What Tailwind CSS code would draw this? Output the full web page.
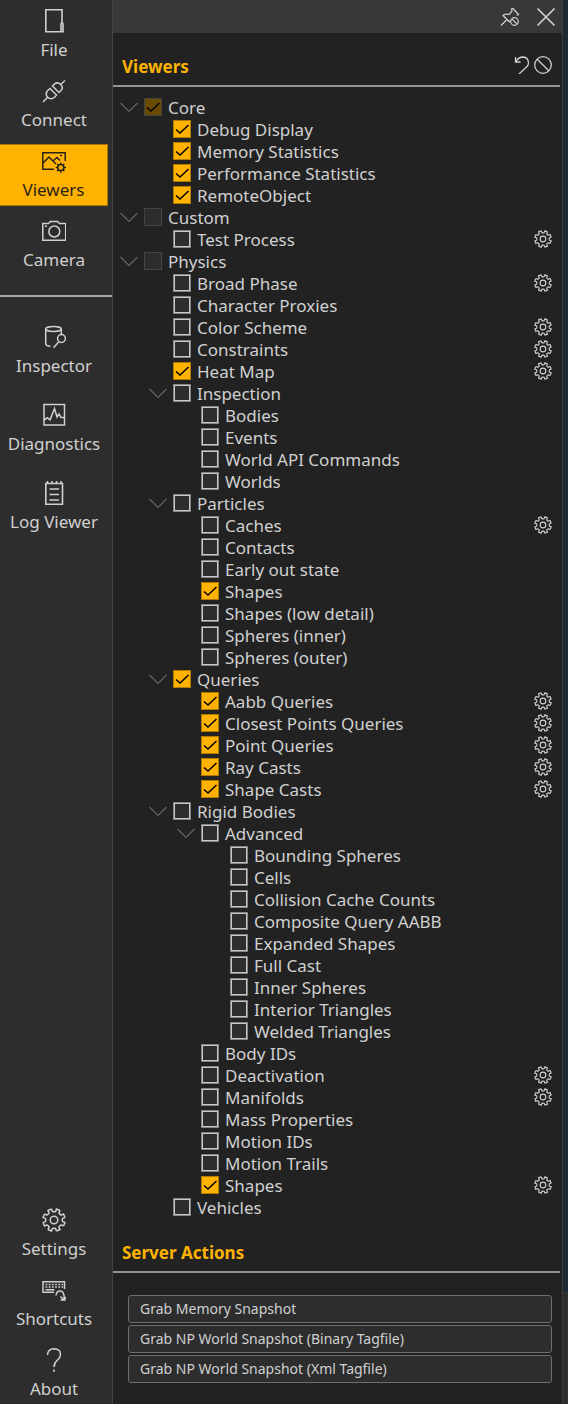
<!DOCTYPE html>
<html lang="en">
<head>
<meta charset="utf-8">
<meta name="viewport" content="width=device-width, initial-scale=1">
<title>Viewers</title>
<script src="https://cdn.jsdelivr.net/npm/@tailwindcss/browser@4"></script>
</head>
<body class="flex min-h-screen bg-[#222222] font-['Noto_Sans','Open_Sans',sans-serif] text-[17px] text-[#d0d0d0]">

<!-- Shared icon shapes -->
<svg class="hidden" aria-hidden="true">
  <symbol id="gear" viewBox="-12 -12 24 24">
    <g fill="none" stroke="currentColor" stroke-linejoin="round">
      <path id="tooth" d="M-2.4-11L-1.6-8.5Q0-7.9 1.6-8.5L2.4-11L6.08-9.48"/>
      <use href="#tooth" transform="rotate(45)"/><use href="#tooth" transform="rotate(90)"/>
      <use href="#tooth" transform="rotate(135)"/><use href="#tooth" transform="rotate(180)"/>
      <use href="#tooth" transform="rotate(225)"/><use href="#tooth" transform="rotate(270)"/>
      <use href="#tooth" transform="rotate(315)"/>
      <circle r="3.8"/>
    </g>
  </symbol>
</svg>

<nav class="flex w-[113px] shrink-0 flex-col border-r border-[#434343] bg-[#2d2d2d]" aria-label="Main">
  <div class="flex flex-col gap-2 pt-1 pr-1">
    <button class="flex h-[62px] flex-col items-center gap-[5px] pt-[5px] leading-6">
      <svg class="size-6 shrink-0" viewBox="0 0 24 24" fill="none" stroke="currentColor" stroke-width="1.6"><path d="M20 14V.8H3.800v22H21V15.500q0-1.600-1-1.600t-1 1.600V22.800"/></svg>
      File</button>
    <button class="flex h-[62px] flex-col items-center gap-[5px] pt-[5px] leading-6">
      <svg class="size-6 shrink-0" viewBox="0 0 24 24" fill="none" stroke="currentColor" stroke-width="1.5"><path d="M1 23L5.500 18.500M18.500 5.500L23 1.500M8 9.500L14.500 16L12.500 18.300Q9 21.300 5.700 18.300Q2.700 15 5.700 11.500ZM10.500 7L17 13.500L19 11.500Q21.700 8.500 18.700 5.500Q15.500 2.500 12.500 5Z"/></svg>
      Connect</button>
    <button class="flex h-[62px] flex-col items-center gap-1 border-y border-r border-[#a87600] bg-[#ffb300] pt-[5px] leading-6 text-[#2a2418]" aria-current="page">
      <svg class="size-6 shrink-0" viewBox="0 0 24 24" fill="none" stroke="currentColor" stroke-width="1.5"><path d="M12 19.200H.8V2.800H23.200V11M1 13L7 7L14 14M11 11L15 7.500L18 10.500M18 5.500H20"/><circle cx="18.800" cy="17.500" r="3"/><path d="M18.800 12.500v2M18.800 20.500v2.300M13.800 17.500h2M21.800 17.500h2.200M15.300 14l1.400 1.400M20.900 19.600l1.500 1.500M22.300 14l-1.400 1.400M16.700 19.600l-1.500 1.500"/></svg>
      Viewers</button>
    <button class="flex h-[62px] flex-col items-center gap-[5px] pt-[5px] leading-6">
      <svg class="size-6 shrink-0" viewBox="0 0 24 24" fill="none" stroke="currentColor" stroke-width="1.5"><path d="M.8 4.500H6.500L8.500 2.500H15.500L17.500 4.500H23.700V21.300H.8ZM3 7.300H5"/><circle cx="12.300" cy="12.500" r="5.500"/></svg>
      Camera</button>
  </div>
  <hr class="mt-[19px] border-t-2 border-[#a5a5a5]">
  <div class="flex flex-col gap-4 pt-[23px] pr-1">
    <button class="flex h-[62px] flex-col items-center gap-[5px] pt-[5px] leading-6">
      <svg class="size-6 shrink-0" viewBox="0 0 24 24" fill="none" stroke="currentColor" stroke-width="1.5"><ellipse cx="11.500" cy="4" rx="7.800" ry="2.500"/><path d="M3.700 4V18.500Q3.700 21 8.500 21.300M19.300 4V9.500M17 16.500L11.500 22.800"/><circle cx="19.500" cy="13.500" r="3.900"/></svg>
      Inspector</button>
    <button class="flex h-[62px] flex-col items-center gap-[5px] pt-[5px] leading-6">
      <svg class="size-6 shrink-0" viewBox="0 0 24 24" fill="none" stroke="currentColor" stroke-width="1.500"><path d="M2 1.500H22.500V22H2ZM2 17L5.500 14.800L8 17L12.500 5.500L15 14L17 11L19 14.500H22.500"/></svg>
      Diagnostics</button>
    <button class="flex h-[62px] flex-col items-center gap-[5px] pt-[5px] leading-6">
      <svg class="size-6 shrink-0" viewBox="0 0 24 24" fill="none" stroke="currentColor" stroke-width="1.600"><path d="M3.800 2.500H20.500V23.200H3.800ZM5.500 0V3M10 0V3M14.500 0V3M19 0V3M7.500 8H17M7.500 13.500H17M7.500 19H17"/></svg>
      Log Viewer</button>
  </div>
  <div class="mt-auto flex flex-col gap-[9px] pr-1">
    <button class="flex h-[61px] flex-col items-center gap-[5px] pt-[5px] leading-6">
      <svg class="size-6 shrink-0" stroke-width="1.500"><use href="#gear"/></svg>
      Settings</button>
    <button class="flex h-[61px] flex-col items-center gap-[5px] pt-[5px] leading-6">
      <svg class="size-6 shrink-0" viewBox="0 0 24 24" fill="none" stroke="currentColor" stroke-width="1.500"><path d="M12 14.200H1V3.700H22.500V11"/><path stroke-dasharray="1.800 1.400" d="M3.500 6.500H21M3.500 9H21"/><path d="M3.500 11.700H12.500M14 17.500Q14.500 12.700 18.500 13Q22.500 13.500 22.300 21.500M18.500 18.500L22.200 22L24 19M18.500 22H23.500"/></svg>
      Shortcuts</button>
    <button class="flex h-[61px] flex-col items-center gap-[5px] pt-[5px] leading-6">
      <svg class="size-6 shrink-0" viewBox="0 0 24 24" fill="none" stroke="currentColor" stroke-width="1.500"><path d="M5.500 7Q6 .8 12 .8Q18.500 1 18.500 6.500Q18.500 9.500 15.500 12Q12 15 12 19M12 21.500V24"/></svg>
      About</button>
  </div>
</nav>

<main class="flex min-w-0 grow flex-col">
  <header class="flex h-[33px] items-center justify-end gap-4 bg-[#383838] pr-[6px]">
    <button aria-label="Unpin">
      <svg class="size-5" viewBox="0 0 20 20" fill="none" stroke="currentColor" stroke-width="1.200"><path d="M1 18.500L6.500 13M9.500 15L3 8.500Q6 6.500 9 7.500L12 4L11.500 2L13 1.500L18.500 7.500L17 8.500"/><circle cx="14.500" cy="14.500" r="3.800"/><path d="M11.800 11.800L17.200 17.200M9.500 15L10.500 13"/></svg>
    </button>
    <button aria-label="Close">
      <svg class="size-5" viewBox="0 0 20 20" fill="none" stroke="currentColor" stroke-width="1.700"><path d="M1.500 1.500L18.500 18.500M18.500 1.500L1.500 18.500"/></svg>
    </button>
  </header>

  <section>
    <div class="mr-[2px] flex h-[54px] items-end justify-between border-b-2 border-[#939193] pr-2 pl-[9px]">
      <h2 class="pb-[6px] leading-6 font-bold text-[#ffb300]">Viewers</h2>
      <div class="flex gap-[2px] pb-[11px]">
        <button aria-label="Reset"><svg class="size-[18px]" viewBox="0 0 18 18" fill="none" stroke="currentColor" stroke-width="1.300"><path d="M1.500 1V6H6.500M1.500 6Q4.500 1 9 1Q14.500 1.500 14.500 7Q14.500 9.500 12 11.500L5 18"/></svg></button>
        <button aria-label="Disable all"><svg class="size-[18px]" viewBox="0 0 18 18" fill="none" stroke="currentColor" stroke-width="1.300"><circle cx="9" cy="9" r="8.300"/><path d="M3.200 3.200L14.800 14.800"/></svg></button>
      </div>
    </div>
    <ul id="tree" class="pt-[10px] pr-[10px] pl-[7px]"></ul>
  </section>

  <section>
    <div class="mr-[2px] flex h-[54px] items-end border-b-2 border-[#939193] pl-[9px]">
      <h2 class="pb-[6px] leading-6 font-bold text-[#ffb300]">Server Actions</h2>
    </div>
    <div class="flex flex-col gap-[2px] pt-[22px] pr-[10px] pl-[15px] text-sm">
      <button class="h-7 rounded-[3px] border border-[#6e6e6e] bg-[#2d2d2d] px-[11px] text-left">Grab Memory Snapshot</button>
      <button class="h-7 rounded-[3px] border border-[#6e6e6e] bg-[#2d2d2d] px-[11px] text-left">Grab NP World Snapshot (Binary Tagfile)</button>
      <button class="h-7 rounded-[3px] border border-[#6e6e6e] bg-[#2d2d2d] px-[11px] text-left">Grab NP World Snapshot (Xml Tagfile)</button>
    </div>
  </section>
</main>

<!-- Edge of the neighbouring viewport -->
<aside class="flex w-[6px] shrink-0 flex-col border-l border-[#3a3a3a]">
  <div class="grow bg-[#1e2936]"></div>
  <div class="h-[112px] border-t border-[#3a3a3a] bg-[#2d2d2d]"></div>
</aside>

<script>
  // Each line: depth, flags, label.  v = expandable, x = checked, d = disabled, g = has settings
  const rows = `0 vxd Core
1 x Debug Display
1 x Memory Statistics
1 x Performance Statistics
1 x RemoteObject
0 vd Custom
1 g Test Process
0 vd Physics
1 g Broad Phase
1 - Character Proxies
1 g Color Scheme
1 g Constraints
1 xg Heat Map
1 v Inspection
2 - Bodies
2 - Events
2 - World API Commands
2 - Worlds
1 v Particles
2 g Caches
2 - Contacts
2 - Early out state
2 x Shapes
2 - Shapes (low detail)
2 - Spheres (inner)
2 - Spheres (outer)
1 vx Queries
2 xg Aabb Queries
2 xg Closest Points Queries
2 xg Point Queries
2 xg Ray Casts
2 xg Shape Casts
1 v Rigid Bodies
2 v Advanced
3 - Bounding Spheres
3 - Cells
3 - Collision Cache Counts
3 - Composite Query AABB
3 - Expanded Shapes
3 - Full Cast
3 - Inner Spheres
3 - Interior Triangles
3 - Welded Triangles
2 - Body IDs
2 g Deactivation
2 g Manifolds
2 - Mass Properties
2 - Motion IDs
2 - Motion Trails
2 xg Shapes
1 - Vehicles`.split('\n');
  const indents = ['pl-0', 'pl-[29px]', 'pl-[57px]', 'pl-[86px]'];
  const chevron = `<button class="mb-[2px] w-[18px]" aria-label="Collapse"><svg class="h-[18px] w-[18px]" viewBox="0 0 18 18" fill="none" stroke="#646464" stroke-width="1.2"><path d="M.5 5L9 13.500L17.500 5"/></svg></button>`;
  document.getElementById('tree').innerHTML = rows.map((row, i) => {
    const [, depth, flags, label] = row.match(/^(\d) (\S+) (.+)$/);
    const has = f => flags.includes(f);
    return `<li class="flex h-[22px] items-center gap-[6px] ${indents[depth]}">
      ${has('v') ? chevron : '<span class="w-[18px]"></span>'}
      <span class="mb-[2px] grid size-[18px] shrink-0">
        <input id="c${i}" type="checkbox" ${has('x') ? 'checked' : ''} ${has('d') ? 'disabled' : ''} class="peer col-start-1 row-start-1 size-[18px] appearance-none border border-[#858585] bg-[#2d2d2d] inset-ring inset-ring-[#c8c8c8] checked:border-[#b07c00] checked:bg-[#ffb300] checked:inset-ring-0 disabled:border-[#444444] disabled:inset-ring-0 disabled:checked:bg-[#6b4b00]">
        <svg class="pointer-events-none invisible col-start-1 row-start-1 size-[18px] peer-checked:visible" viewBox="0 0 18 18" fill="none" stroke="#000" stroke-width="1.5"><path d="M3 9.500L7 13L15.500 5"/></svg>
      </span>
      <label for="c${i}" class="leading-[22px]">${label}</label>
      ${has('g') ? `<button class="mb-[2px] ml-auto" aria-label="${label} settings"><svg class="size-[18px]" stroke-width="1.5"><use href="#gear"/></svg></button>` : ''}
    </li>`;
  }).join('');
</script>
</body>
</html>
